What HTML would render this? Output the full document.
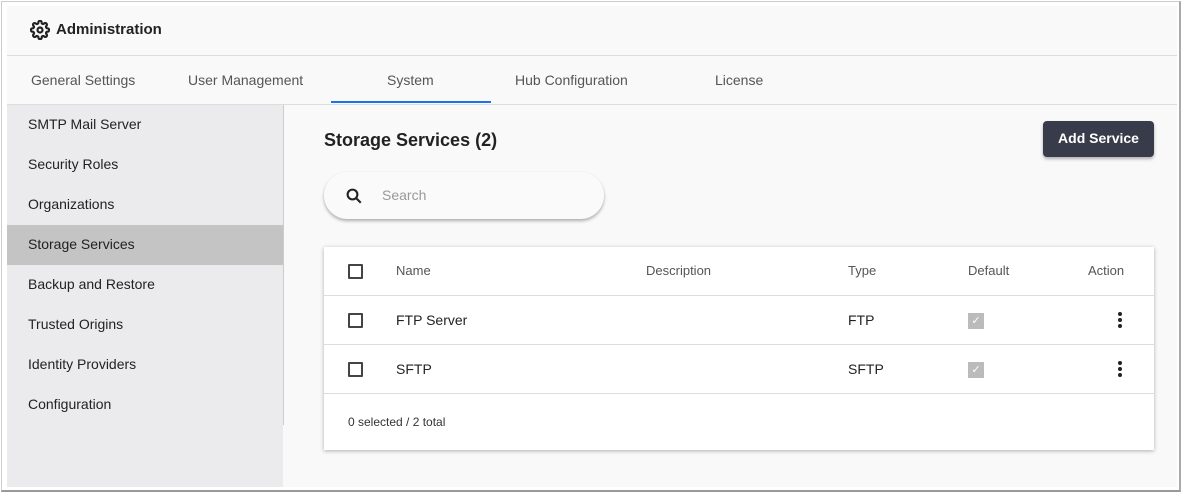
<!DOCTYPE html>
<html><head><meta charset="utf-8"><style>
*{box-sizing:border-box;margin:0;padding:0}
body{width:1184px;height:494px;background:#fff;font-family:"Liberation Sans",sans-serif;position:relative;overflow:hidden;color:#222}
.frame{position:absolute;left:1px;top:1px;width:1180px;height:491px;border:1px solid #ccc;border-right:2px solid #aaa;border-bottom:2px solid #999;background:#fff}
.app{position:absolute;left:7px;top:6px;width:1170px;height:481px;background:#f9f9f9}
.hdr{position:absolute;left:0;top:0;width:1170px;height:50px;border-bottom:1px solid #ddd}
.hdr span{position:absolute;left:49px;top:15px;font-size:15px;font-weight:bold;color:#222}
.tabs{position:absolute;left:0;top:50px;width:1170px;height:49px;border-bottom:1px solid #ddd;font-size:14px;color:#555}
.tab{position:absolute;top:16px}
.ul{position:absolute;left:324px;top:45px;width:160px;height:2px;background:#1a73e8}
.side{position:absolute;left:0;top:99px;width:276px;height:382px;background:#ebebed}
.sline{position:absolute;left:276px;top:99px;width:1px;height:320px;background:#ccc}
.si{position:absolute;left:0;width:276px;height:40px;padding:11px 0 0 21px;font-size:14px;color:#222}
.si.act{background:#c4c4c4}
h2{position:absolute;left:317px;top:124px;font-size:18px;font-weight:bold;color:#222}
.btn{position:absolute;left:1036px;top:115px;width:111px;height:36px;background:#383c4a;border-radius:4px;color:#fff;font-size:14px;font-weight:bold;text-align:center;line-height:35px;box-shadow:0 2px 3px rgba(0,0,0,.3)}
.search{position:absolute;left:317px;top:166px;width:280px;height:47px;border-radius:24px;background:#fafafa;box-shadow:0 2px 3px rgba(0,0,0,.3)}
.search span{position:absolute;left:58px;top:15px;font-size:14px;color:#999}
.card{position:absolute;left:317px;top:241px;width:830px;height:203px;background:#fff;box-shadow:0 1px 4px rgba(0,0,0,.3)}
.row{position:absolute;left:0;width:830px;height:49px;border-bottom:1px solid #ddd;font-size:14px}
.row div{position:absolute;top:16px}
.hd div{color:#555;font-size:13px;top:16px}
.cb{width:15px;height:15px;border:2px solid #444;border-radius:1px;left:24px;top:17px!important}
.chk{left:644px;top:17px!important;width:16px;height:16px;background:#bbb;color:#fff;font-size:11px;text-align:center;line-height:16px}
.dots{left:794px}
.dots i{display:block;width:4px;height:4px;border-radius:2px;background:#222;margin-bottom:2px}
.foot{position:absolute;left:24px;top:168px;font-size:12px;color:#333}
</style></head><body>
<div class="frame"></div>
<div class="app">
 <div class="hdr">
  <svg style="position:absolute;left:23px;top:14px" width="20" height="20" viewBox="0 0 24 24" fill="none" stroke="#222" stroke-width="2.6"><circle cx="12" cy="12" r="3"/><path d="M19.4 15a1.65 1.65 0 0 0 .33 1.82l.06.06a2 2 0 1 1-2.830 2.83l-.06-.06a1.65 1.65 0 0 0-1.82-.33 1.65 1.65 0 0 0-1 1.51V21a2 2 0 1 1-4 0v-.09A1.65 1.650 0 0 0 9 19.4a1.65 1.65 0 0 0-1.82.33l-.06.06a2 2 0 1 1-2.83-2.83l.06-.06A1.65 1.65 0 0 0 4.6 15a1.65 1.65 0 0 0-1.51-1H3a2 2 0 1 1 0-4h.09A1.65 1.65 0 0 0 4.6 9a1.65 1.65 0 0 0-.33-1.82l-.06-.06a2 2 0 1 1 2.83-2.830l.06.06A1.65 1.65 0 0 0 9 4.6a1.65 1.65 0 0 0 1-1.51V3a2 2 0 1 1 4 0v.09a1.65 1.65 0 0 0 1 1.51 1.65 1.65 0 0 0 1.82-.33l.06-.06a2 2 0 1 1 2.83 2.83l-.06.06A1.65 1.65 0 0 0 19.4 9a1.65 1.65 0 0 0 1.51 1H21a2 2 0 1 1 0 4h-.09a1.65 1.65 0 0 0-1.51 1z"/></svg>
  <span>Administration</span>
 </div>
 <div class="tabs">
  <div class="tab" style="left:24px">General Settings</div>
  <div class="tab" style="left:181px">User Management</div>
  <div class="tab" style="left:380px">System</div>
  <div class="tab" style="left:508px">Hub Configuration</div>
  <div class="tab" style="left:708px">License</div>
  <div class="ul"></div>
 </div>
 <div class="side">
  <div class="si" style="top:0">SMTP Mail Server</div>
  <div class="si" style="top:40px">Security Roles</div>
  <div class="si" style="top:80px">Organizations</div>
  <div class="si act" style="top:120px">Storage Services</div>
  <div class="si" style="top:160px">Backup and Restore</div>
  <div class="si" style="top:200px">Trusted Origins</div>
  <div class="si" style="top:240px">Identity Providers</div>
  <div class="si" style="top:280px">Configuration</div>
 </div>
 <div class="sline"></div>
 <h2>Storage Services (2)</h2>
 <div class="btn">Add Service</div>
 <div class="search">
  <svg style="position:absolute;left:21px;top:15px" width="18" height="18" viewBox="0 0 24 24" fill="none" stroke="#222" stroke-width="2.8"><circle cx="10" cy="10" r="6.5"/><path d="M15 15l6 6"/></svg>
  <span>Search</span>
 </div>
 <div class="card">
  <div class="row hd" style="top:0">
   <div class="cb"></div><div style="left:72px">Name</div><div style="left:322px">Description</div><div style="left:524px">Type</div><div style="left:644px">Default</div><div style="left:764px">Action</div>
  </div>
  <div class="row" style="top:49px">
   <div class="cb"></div><div style="left:72px">FTP Server</div><div style="left:524px">FTP</div><div class="chk">✓</div><div class="dots"><i></i><i></i><i></i></div>
  </div>
  <div class="row" style="top:98px">
   <div class="cb"></div><div style="left:72px">SFTP</div><div style="left:524px">SFTP</div><div class="chk">✓</div><div class="dots"><i></i><i></i><i></i></div>
  </div>
  <div class="foot">0 selected / 2 total</div>
 </div>
</div>
</body></html>
